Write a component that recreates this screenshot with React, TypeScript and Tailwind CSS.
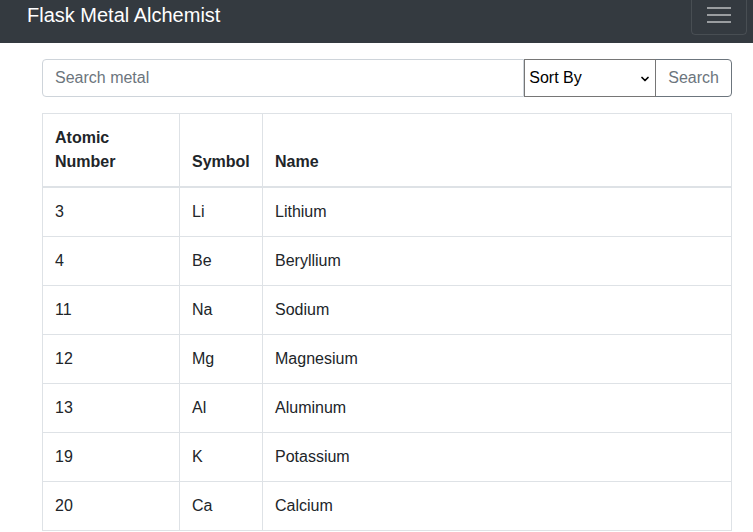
import { ChevronDown } from 'lucide-react';

const METALS: [number, string, string][] = [
  [3, 'Li', 'Lithium'],
  [4, 'Be', 'Beryllium'],
  [11, 'Na', 'Sodium'],
  [12, 'Mg', 'Magnesium'],
  [13, 'Al', 'Aluminum'],
  [19, 'K', 'Potassium'],
  [20, 'Ca', 'Calcium'],
];

function Navbar() {
  return (
    <nav className="h-[43px] overflow-hidden bg-[#343a40]">
      <div className="-mt-[13px] flex h-14 items-center justify-between pl-[27px] pr-[6px]">
        <span className="text-[20px] leading-[30px] text-white">Flask Metal Alchemist</span>
        <button className="flex h-10 w-[56px] flex-col items-center justify-center gap-[5px] rounded border border-white/10">
          <span className="h-[2px] w-6 bg-white/50" />
          <span className="h-[2px] w-6 bg-white/50" />
          <span className="h-[2px] w-6 bg-white/50" />
        </button>
      </div>
    </nav>
  );
}

function SearchBar() {
  return (
    <div className="flex h-[38px]">
      <input
        className="min-w-0 flex-1 rounded-l border border-[#ced4da] px-3 text-base text-[#495057] placeholder:text-[#6c757d] focus:outline-none"
        placeholder="Search metal"
      />
      <div className="relative w-[132px]">
        <select className="h-full w-full appearance-none border border-[#767676] bg-white pl-1 text-base text-black focus:outline-none">
          <option>Sort By</option>
          <option>Atomic Number</option>
          <option>Name</option>
        </select>
        <ChevronDown
          size={12}
          strokeWidth={3.5}
          className="pointer-events-none absolute right-[5px] top-[14px] text-black"
        />
      </div>
      <button className="-ml-px rounded-r border border-[#6c757d] px-3 text-base text-[#6c757d]">
        Search
      </button>
    </div>
  );
}

export default function App() {
  return (
    <div className="min-h-screen bg-white font-['Liberation_Sans',Arial,sans-serif] text-[#212529]">
      <Navbar />
      <main className="ml-[42px] w-[690px] pt-4">
        <SearchBar />
        <table className="mt-4 w-full table-fixed border-collapse border border-[#dee2e6] text-base leading-6">
          <thead>
            <tr>
              <th className="w-[137px] border border-b-2 border-[#dee2e6] p-3 text-left align-bottom font-bold">
                Atomic Number
              </th>
              <th className="w-[83px] border border-b-2 border-[#dee2e6] p-3 text-left align-bottom font-bold">
                Symbol
              </th>
              <th className="border border-b-2 border-[#dee2e6] p-3 text-left align-bottom font-bold">
                Name
              </th>
            </tr>
          </thead>
          <tbody>
            {METALS.map(([num, sym, name]) => (
              <tr key={num}>
                <td className="border border-[#dee2e6] p-3">{num}</td>
                <td className="border border-[#dee2e6] p-3">{sym}</td>
                <td className="border border-[#dee2e6] p-3">{name}</td>
              </tr>
            ))}
          </tbody>
        </table>
      </main>
    </div>
  );
}
